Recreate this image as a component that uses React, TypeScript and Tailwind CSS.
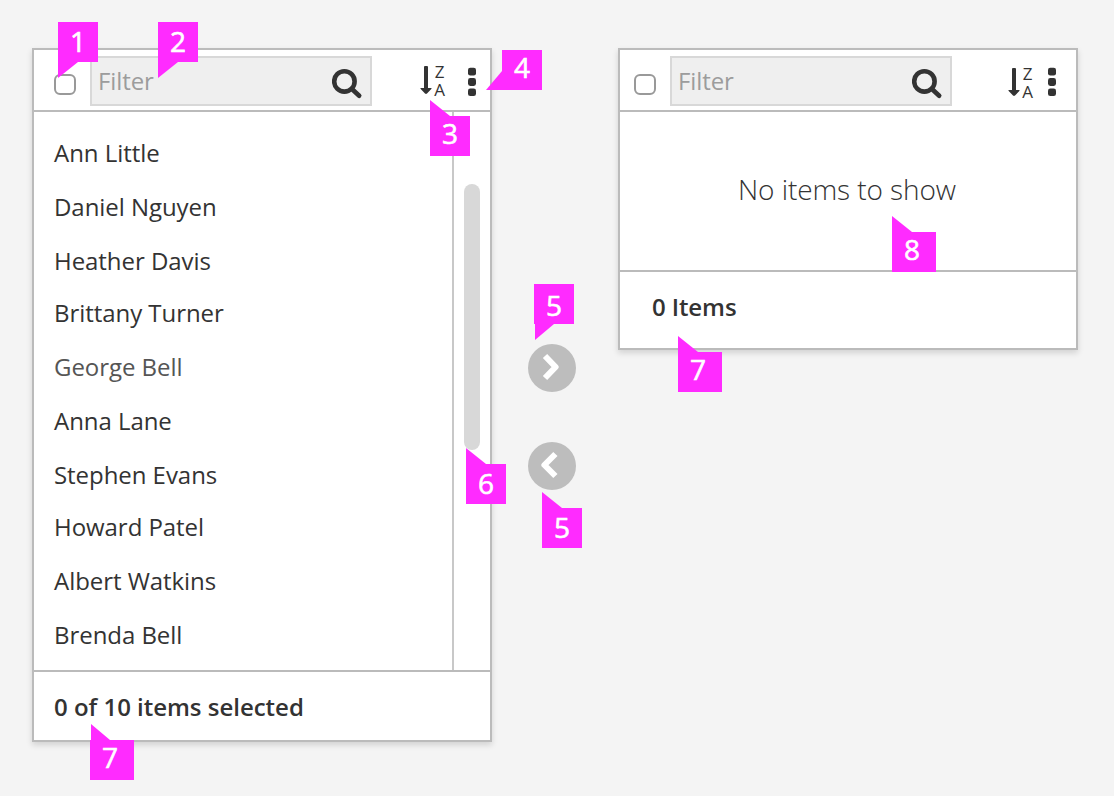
import React from "react";

type Tail = "bottom" | "bottom-inset" | "top" | "top-inset" | "left";

const TAILS: Record<Tail, string> = {
  bottom: "0,40 20,40 0,56",
  "bottom-inset": "1,40 20,40 1,56",
  top: "0,0 20,0 0,-16",
  "top-inset": "1,0 20,0 1,-16",
  left: "0,21 0,40 -16,40",
};

function Callout({ n, tail, className, text }: { n: number; tail: Tail; className: string; text: string }) {
  return (
    <div className={`absolute h-10 bg-[#ff2bff] ${className}`}>
      <svg className="absolute left-0 top-0 overflow-visible" width="40" height="40" fill="#ff2bff">
        <polygon points={TAILS[tail]} />
      </svg>
      <span
        className={`relative block w-10 text-center text-[28px] leading-10 text-white [-webkit-text-stroke:0.6px_white] ${text}`}
      >
        {n}
      </span>
    </div>
  );
}

function SearchIcon() {
  return (
    <svg width="32" height="32" viewBox="0 0 32 32" fill="none" stroke="#333" strokeLinecap="round">
      <circle cx="12.4" cy="13.4" r="10.2" strokeWidth="4.6" />
      <path d="M21 22 L27.2 27.8" strokeWidth="4.6" />
    </svg>
  );
}

function SortIcon() {
  return (
    <div className="flex h-8 w-[26px]">
      <svg className="shrink-0" width="13" height="32" viewBox="0 0 13 32" fill="#333">
        <path d="M5 2h2q1 0 1 1v21h3q1.2 0 .3 1L7 29.6q-1 .8-2 0L.7 25q-.9-1 .3-1h3V3q0-1 1-1z" />
      </svg>
      <div className="flex w-[13px] flex-col items-center text-[17px] leading-[18px] text-[#333]">
        <span className="-mt-[1px]">Z</span>
        <span>A</span>
      </div>
    </div>
  );
}

function KebabIcon() {
  return (
    <svg width="8" height="32" viewBox="0 0 8 32" fill="#333">
      <rect y="3.8" width="8" height="7.8" rx="2.3" />
      <rect y="14.1" width="8" height="7.8" rx="2.3" />
      <rect y="24.4" width="8" height="7.6" rx="2.3" />
    </svg>
  );
}

function Header({ pad, sort, menu }: { pad: string; sort: string; menu: string }) {
  return (
    <div className={`flex h-[62px] shrink-0 items-start border-b-2 border-[#bbb] ${pad}`}>
      <div className="mt-[24px] h-[21px] w-[22px] rounded-[6px] border-2 border-[#999]" />
      <div className="ml-[14px] mt-1.5 flex h-[50px] w-[282px] border-2 border-[#d8d8d8] bg-[#efefef]">
        <span className="w-[240px] pl-[6px] text-2xl leading-[46px] tracking-[-0.1px] text-[#9c9c9c]">Filter</span>
        <span className="mt-[10px]">
          <SearchIcon />
        </span>
      </div>
      <div className={sort}>
        <SortIcon />
      </div>
      <div className={menu}>
        <KebabIcon />
      </div>
    </div>
  );
}

const PEOPLE = [
  { name: "Ann Little", row: "h-[54px]" },
  { name: "Daniel Nguyen", row: "h-[54px]" },
  { name: "Heather Davis", row: "h-[52px]" },
  { name: "Brittany Turner", row: "h-[54px]" },
  { name: "George Bell", row: "h-[54px] text-[#555]" },
  { name: "Anna Lane", row: "h-[54px]" },
  { name: "Stephen Evans", row: "h-[52px]" },
  { name: "Howard Patel", row: "h-[54px]" },
  { name: "Albert Watkins", row: "h-[54px]" },
  { name: "Brenda Bell", row: "h-[54px]" },
];

const PANEL = "flex w-[460px] flex-col border-2 border-[#bbb] bg-white shadow-[0_3px_6px_rgba(0,0,0,0.14)]";

function MoveButton({ label, points }: { label: string; points: string }) {
  return (
    <button aria-label={label} className="h-12 w-12 rounded-full bg-[#bdbdbd]">
      <svg width="48" height="48" fill="none" stroke="#fff" strokeWidth="6">
        <polyline points={points} strokeLinejoin="round" />
      </svg>
    </button>
  );
}

export default function App() {
  return (
    <div className="relative flex h-[796px] w-[1114px] items-start overflow-hidden bg-[#f4f4f4] pl-8 pt-12 font-['Open_Sans',sans-serif] text-[#333]">
      <section className={`${PANEL} h-[694px]`}>
        <Header pad="pl-5" sort="ml-12 mt-3.5" menu="ml-[22px] mt-3.5" />
        <div className="flex h-[560px] shrink-0 border-b-2 border-[#bbb]">
          <ul className="w-[418px] pl-5 pt-[14px] text-2xl tracking-[-0.05px]">
            {PEOPLE.map((p) => (
              <li key={p.name} className={`leading-[54px] ${p.row}`}>
                {p.name}
              </li>
            ))}
          </ul>
          <div className="w-[38px] border-l-2 border-[#c8c8c8] pl-[10px] pt-[72px]">
            <div className="h-[266px] w-4 rounded-full bg-[#d8d8d8]" />
          </div>
        </div>
        <div className="pl-5 text-2xl font-semibold leading-[70px] tracking-[-0.02px]">0 of 10 items selected</div>
      </section>

      <div className="mt-[296px] flex w-[126px] flex-col items-center gap-[50px] pr-[6px]">
        <MoveButton label="Add" points="17,12 27.6,23 17,34" />
        <MoveButton label="Remove" points="27.4,12 16.4,23 27.4,34" />
      </div>

      <section className={`${PANEL} h-[302px]`}>
        <Header pad="pl-[14px]" sort="ml-14 mt-4" menu="ml-[14px] mt-3.5" />
        <div className="h-[160px] shrink-0 border-b-2 border-[#bbb] pr-[2px] text-center text-[28px] font-light leading-[154px] tracking-[-0.08px]">
          No items to show
        </div>
        <div className="pl-8 text-2xl font-semibold leading-[70px] tracking-[-0.1px]">0 Items</div>
      </section>

      <Callout n={1} tail="bottom" className="left-[58px] top-[22px] w-10" text="-top-[1px]" />
      <Callout n={2} tail="bottom" className="left-[158px] top-[22px] w-10" text="-top-[1px]" />
      <Callout n={3} tail="top" className="left-[430px] top-[116px] w-10" text="-top-[3px]" />
      <Callout n={4} tail="left" className="left-[502px] top-[50px] w-10" text="-top-[3px]" />
      <Callout n={5} tail="bottom-inset" className="left-[534px] top-[284px] w-10" text="top-[1px]" />
      <Callout n={5} tail="top" className="left-[542px] top-[508px] w-10" text="-top-[1px]" />
      <Callout n={6} tail="top" className="left-[466px] top-[464px] w-10" text="-top-[1px]" />
      <Callout n={7} tail="top-inset" className="left-[90px] top-[740px] w-11" text="-top-[3px]" />
      <Callout n={7} tail="top" className="left-[678px] top-[352px] w-11" text="-top-[3px]" />
      <Callout n={8} tail="top" className="left-[892px] top-[232px] w-11" text="-top-[3px]" />
    </div>
  );
}
